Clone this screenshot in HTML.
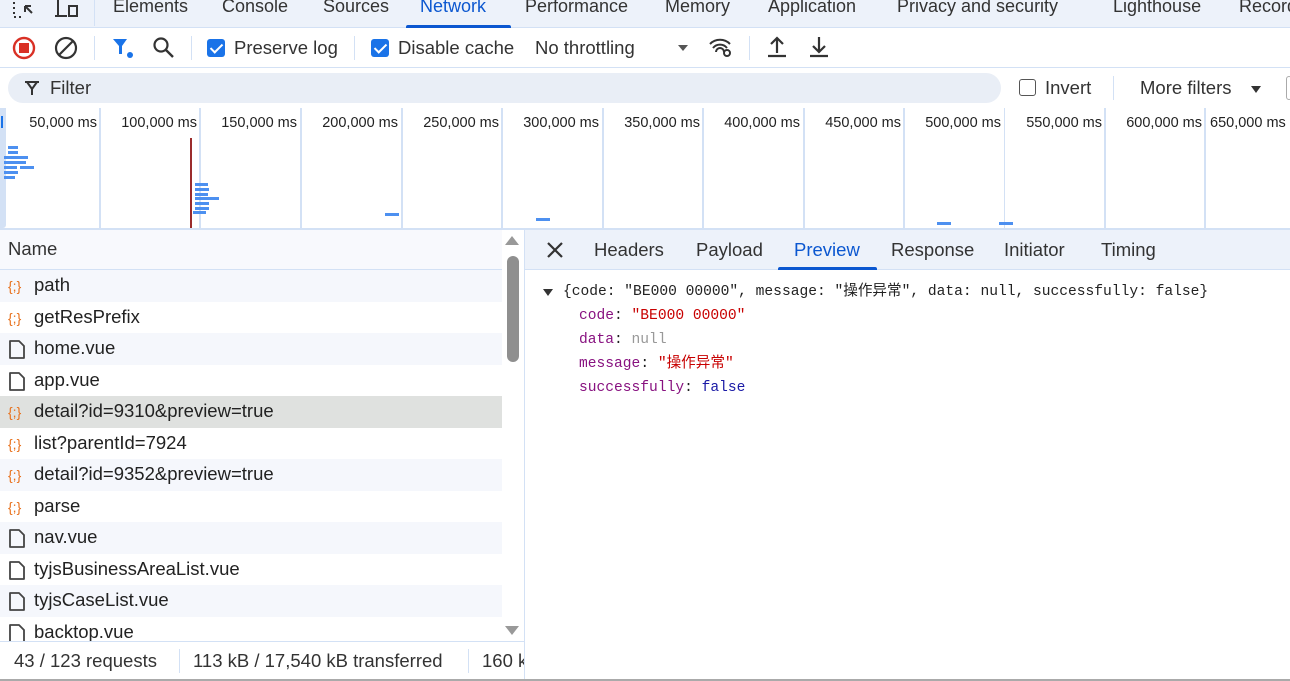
<!DOCTYPE html>
<html><head><meta charset="utf-8"><style>
*{margin:0;padding:0;box-sizing:border-box}
body{width:1290px;height:681px;overflow:hidden;background:#fff;font-family:"Liberation Sans","Noto Sans CJK SC",sans-serif;color:#1f1f1f;position:relative}
.abs{position:absolute}
.tabbar{left:0;top:0;width:1290px;height:28px;background:#edf2fa;border-bottom:1px solid #d3e1f5}
.tab{position:absolute;top:-4px;font-size:18px;color:#333}
.tb{left:0;top:28px;width:1290px;height:40px;border-bottom:1px solid #d3e1f5}
.t{position:absolute;font-size:18.5px;color:#333}
.cb{position:absolute;width:18px;height:18px;background:#1a73e8;border-radius:3px}
.cb:after{content:"";position:absolute;left:6px;top:2px;width:5px;height:10px;border:solid #fff;border-width:0 2px 2px 0;transform:rotate(45deg)}
.sep{position:absolute;width:1px;height:24px;background:#d3e1f5}
.tl{left:0;top:108px;width:1290px;height:121px;border-bottom:1px solid #d3e1f5}
.gl{position:absolute;top:0;width:2px;height:120px;background:#d3e1f5}
.lb{position:absolute;top:7px;font-size:14.5px;color:#222;text-align:right;width:97px;white-space:nowrap}
.bar{position:absolute;height:3px;background:#4d90f0}
.row{position:absolute;left:0;width:502px;height:31.5px;font-size:18.5px;color:#222}
.row span{position:absolute;left:34px;top:4px}
.ic{position:absolute;left:8px;top:7px}
.js{font-family:"Liberation Mono","Noto Sans CJK SC",monospace;font-size:14.6px;position:absolute;white-space:pre;line-height:20px;height:20px}
</style></head><body>
<div class="abs tabbar">
<svg class="abs" style="left:12px;top:0" width="24" height="20"><path d="M2 2v2M2 7v2M2 12v2M2 17h2M7 17h2M13 6l7 7M13 6h6M13 6v6" stroke="#333" stroke-width="2" fill="none"/></svg>
<svg class="abs" style="left:54px;top:0" width="26" height="20"><path d="M4 0v16M1 16h12M15 6h8v10h-8z" stroke="#333" stroke-width="2" fill="none"/></svg>
<div class="abs" style="left:94px;top:0;width:1px;height:26px;background:#d3e1f5"></div>
<div class="tab" style="left:113px">Elements</div>
<div class="tab" style="left:222px">Console</div>
<div class="tab" style="left:323px">Sources</div>
<div class="tab" style="left:420px;color:#0b57d0">Network</div>
<div class="abs" style="left:406px;top:25px;width:105px;height:3px;background:#0b57d0;border-radius:2px 2px 0 0"></div>
<div class="tab" style="left:525px">Performance</div>
<div class="tab" style="left:665px">Memory</div>
<div class="tab" style="left:768px">Application</div>
<div class="tab" style="left:897px">Privacy and security</div>
<div class="tab" style="left:1113px">Lighthouse</div>
<div class="tab" style="left:1239px">Recorder</div>
</div>
<div class="abs tb">
<svg class="abs" style="left:12px;top:8px" width="24" height="24"><circle cx="12" cy="12" r="10" stroke="#d93025" stroke-width="2.4" fill="none"/><rect x="7" y="7" width="10" height="10" fill="#d93025"/></svg>
<svg class="abs" style="left:54px;top:8px" width="24" height="24"><circle cx="12" cy="12" r="10" stroke="#333" stroke-width="2.2" fill="none"/><path d="M5 19L19 5" stroke="#333" stroke-width="2.2"/></svg>
<div class="sep" style="left:94px;top:8px"></div>
<svg class="abs" style="left:112px;top:10px" width="24" height="22"><path d="M1 1h14l-5 7v8h-3v-8z" fill="#1a73e8"/><circle cx="18" cy="17" r="3" fill="#1a73e8"/></svg>
<svg class="abs" style="left:152px;top:8px" width="24" height="24"><circle cx="9" cy="9" r="6.5" stroke="#333" stroke-width="2.2" fill="none"/><path d="M14 14l7 7" stroke="#333" stroke-width="2.4"/></svg>
<div class="sep" style="left:191px;top:8px"></div>
<div class="cb" style="left:207px;top:11px"></div>
<div class="t" style="left:234px;top:9px">Preserve log</div>
<div class="sep" style="left:354px;top:8px"></div>
<div class="cb" style="left:371px;top:11px"></div>
<div class="t" style="left:398px;top:9px">Disable cache</div>
<div class="t" style="left:535px;top:9px">No throttling</div>
<div class="abs" style="left:678px;top:17px;border:5px solid transparent;border-top:6px solid #555;border-bottom:0"></div>
<svg class="abs" style="left:708px;top:8px" width="28" height="24"><path d="M2 8a14 14 0 0 1 20 0M5 12a9 9 0 0 1 14 0M8 16a4 4 0 0 1 8 0" stroke="#333" stroke-width="2" fill="none"/><circle cx="19" cy="17" r="3" stroke="#333" stroke-width="2" fill="none"/></svg>
<div class="sep" style="left:749px;top:8px"></div>
<svg class="abs" style="left:766px;top:7px" width="22" height="24"><path d="M11 18V3M5 9l6-6 6 6M2 21h18" stroke="#333" stroke-width="2.2" fill="none"/></svg>
<svg class="abs" style="left:808px;top:7px" width="22" height="24"><path d="M11 2v15M5 11l6 6 6-6M2 21h18" stroke="#333" stroke-width="2.2" fill="none"/></svg>
</div>
<div class="abs" style="left:8px;top:73px;width:993px;height:30px;background:#e9eef6;border-radius:15px"></div>
<svg class="abs" style="left:24px;top:80px" width="16" height="16"><path d="M1 2h14M3 2l5 7v6M13 2l-5 7" stroke="#333" stroke-width="2" fill="none"/></svg>
<div class="t" style="left:50px;top:77px">Filter</div>
<div class="abs" style="left:1019px;top:79px;width:17px;height:17px;border:1.5px solid #555;border-radius:3px"></div>
<div class="t" style="left:1045px;top:77px">Invert</div>
<div class="abs" style="left:1113px;top:76px;width:1px;height:24px;background:#d3e1f5"></div>
<div class="t" style="left:1140px;top:77px">More filters</div>
<div class="abs" style="left:1251px;top:86px;border:5px solid transparent;border-top:7px solid #333;border-bottom:0"></div>
<div class="abs" style="left:1286px;top:76px;width:6px;height:24px;border:1px solid #aaa;border-radius:3px"></div>
<div class="abs tl">
<div class="abs" style="left:0;top:0;width:6px;height:120px;background:#d3e1f5;border-radius:0 0 3px 0"></div>
<div class="abs" style="left:1px;top:8px;width:2px;height:12px;background:#1a73e8"></div>
<div class="gl" style="left:99px"></div><div class="gl" style="left:199px"></div><div class="gl" style="left:300px"></div><div class="gl" style="left:401px"></div><div class="gl" style="left:501px"></div><div class="gl" style="left:602px"></div><div class="gl" style="left:702px"></div><div class="gl" style="left:803px"></div><div class="gl" style="left:903px"></div><div class="gl" style="left:1004px;width:1px"></div><div class="gl" style="left:1104px"></div><div class="gl" style="left:1204px"></div>
<div class="lb" style="left:0">50,000 ms</div><div class="lb" style="left:100px">100,000 ms</div><div class="lb" style="left:200px">150,000 ms</div><div class="lb" style="left:301px">200,000 ms</div><div class="lb" style="left:402px">250,000 ms</div><div class="lb" style="left:502px">300,000 ms</div><div class="lb" style="left:603px">350,000 ms</div><div class="lb" style="left:703px">400,000 ms</div><div class="lb" style="left:804px">450,000 ms</div><div class="lb" style="left:904px">500,000 ms</div><div class="lb" style="left:1005px">550,000 ms</div><div class="lb" style="left:1105px">600,000 ms</div><div class="lb" style="left:1210px;text-align:left;width:90px">650,000 ms</div>
<div class="bar" style="left:8px;top:38px;width:10px"></div><div class="bar" style="left:8px;top:43px;width:10px"></div><div class="bar" style="left:4px;top:48px;width:24px"></div><div class="bar" style="left:4px;top:53px;width:22px"></div><div class="bar" style="left:4px;top:58px;width:13px"></div><div class="bar" style="left:20px;top:58px;width:14px"></div><div class="bar" style="left:4px;top:63px;width:14px"></div><div class="bar" style="left:4px;top:68px;width:11px"></div>
<div class="abs" style="left:190px;top:30px;width:2px;height:90px;background:#9b2c2c"></div>
<div class="bar" style="left:195px;top:75px;width:13px"></div><div class="bar" style="left:195px;top:80px;width:14px"></div><div class="bar" style="left:195px;top:85px;width:13px"></div><div class="bar" style="left:195px;top:89px;width:24px"></div><div class="bar" style="left:195px;top:94px;width:14px"></div><div class="bar" style="left:195px;top:99px;width:14px"></div><div class="bar" style="left:193px;top:103px;width:13px"></div>
<div class="bar" style="left:385px;top:105px;width:14px"></div><div class="bar" style="left:536px;top:110px;width:14px"></div><div class="bar" style="left:937px;top:114px;width:14px"></div><div class="bar" style="left:999px;top:114px;width:14px"></div>
</div>
<div class="abs" style="left:0;top:229px;width:1290px;height:1px;background:#d3e1f5"></div>
<div class="abs" style="left:0;top:230px;width:502px;height:40px;background:#f8f9fd;border-bottom:1px solid #d3e1f5"></div>
<div class="t" style="left:8px;top:238px">Name</div>
<div class="abs" style="left:502px;top:230px;width:22px;height:411px;background:#fff"></div>
<div class="abs" style="left:505px;top:236px;border:7px solid transparent;border-bottom:9px solid #999;border-top:0"></div>
<div class="abs" style="left:507px;top:256px;width:12px;height:106px;background:#8f8f8f;border-radius:6px"></div>
<div class="abs" style="left:505px;top:626px;border:7px solid transparent;border-top:9px solid #999;border-bottom:0"></div>
<div class="abs" style="left:524px;top:230px;width:1px;height:451px;background:#d3e1f5"></div>

<div class="row" style="top:270px;background:#f5f7fc"><svg class="ic" width="20" height="18"><text x="0" y="14" font-family="Liberation Sans" font-size="14" fill="#e8711c">{;}</text></svg><span>path</span></div>
<div class="row" style="top:301.5px"><svg class="ic" width="20" height="18"><text x="0" y="14" font-family="Liberation Sans" font-size="14" fill="#e8711c">{;}</text></svg><span>getResPrefix</span></div>
<div class="row" style="top:333px;background:#f5f7fc"><svg class="ic" width="18" height="20"><path d="M2 1h9l5 5v12H2z" stroke="#444" stroke-width="1.8" fill="none" stroke-linejoin="round"/></svg><span>home.vue</span></div>
<div class="row" style="top:364.5px"><svg class="ic" width="18" height="20"><path d="M2 1h9l5 5v12H2z" stroke="#444" stroke-width="1.8" fill="none" stroke-linejoin="round"/></svg><span>app.vue</span></div>
<div class="row" style="top:396px;background:#dfe1df"><svg class="ic" width="20" height="18"><text x="0" y="14" font-family="Liberation Sans" font-size="14" fill="#e8711c">{;}</text></svg><span>detail?id=9310&amp;preview=true</span></div>
<div class="row" style="top:427.5px"><svg class="ic" width="20" height="18"><text x="0" y="14" font-family="Liberation Sans" font-size="14" fill="#e8711c">{;}</text></svg><span>list?parentId=7924</span></div>
<div class="row" style="top:459px;background:#f5f7fc"><svg class="ic" width="20" height="18"><text x="0" y="14" font-family="Liberation Sans" font-size="14" fill="#e8711c">{;}</text></svg><span>detail?id=9352&amp;preview=true</span></div>
<div class="row" style="top:490.5px"><svg class="ic" width="20" height="18"><text x="0" y="14" font-family="Liberation Sans" font-size="14" fill="#e8711c">{;}</text></svg><span>parse</span></div>
<div class="row" style="top:522px;background:#f5f7fc"><svg class="ic" width="18" height="20"><path d="M2 1h9l5 5v12H2z" stroke="#444" stroke-width="1.8" fill="none" stroke-linejoin="round"/></svg><span>nav.vue</span></div>
<div class="row" style="top:553.5px"><svg class="ic" width="18" height="20"><path d="M2 1h9l5 5v12H2z" stroke="#444" stroke-width="1.8" fill="none" stroke-linejoin="round"/></svg><span>tyjsBusinessAreaList.vue</span></div>
<div class="row" style="top:585px;background:#f5f7fc"><svg class="ic" width="18" height="20"><path d="M2 1h9l5 5v12H2z" stroke="#444" stroke-width="1.8" fill="none" stroke-linejoin="round"/></svg><span>tyjsCaseList.vue</span></div>
<div class="row" style="top:616.5px;height:24px;overflow:hidden"><svg class="ic" width="18" height="20"><path d="M2 1h9l5 5v12H2z" stroke="#444" stroke-width="1.8" fill="none" stroke-linejoin="round"/></svg><span>backtop.vue</span></div>

<div class="abs" style="left:0;top:641px;width:524px;height:1px;background:#d3e1f5"></div>
<div class="t" style="left:14px;top:650px">43 / 123 requests</div>
<div class="abs" style="left:179px;top:649px;width:1px;height:24px;background:#d3e1f5"></div>
<div class="t" style="left:193px;top:650px">113 kB / 17,540 kB transferred</div>
<div class="abs" style="left:468px;top:649px;width:1px;height:24px;background:#d3e1f5"></div>
<div class="abs" style="left:482px;top:650px;width:42px;overflow:hidden;white-space:nowrap;font-size:18.5px;color:#333">160 kB</div>
<div class="abs" style="left:0;top:679px;width:1290px;height:2px;background:#aaa"></div>

<div class="abs" style="left:525px;top:230px;width:765px;height:40px;background:#edf2fa;border-bottom:1px solid #d3e1f5"></div>
<svg class="abs" style="left:546px;top:241px" width="18" height="18"><path d="M2 2l14 14M16 2L2 16" stroke="#333" stroke-width="2.2"/></svg>
<div class="t" style="left:594px;top:239px">Headers</div>
<div class="t" style="left:696px;top:239px">Payload</div>
<div class="t" style="left:794px;top:239px;color:#0b57d0">Preview</div>
<div class="abs" style="left:778px;top:267px;width:99px;height:3px;background:#0b57d0;border-radius:2px 2px 0 0"></div>
<div class="t" style="left:891px;top:239px">Response</div>
<div class="t" style="left:1004px;top:239px">Initiator</div>
<div class="t" style="left:1101px;top:239px">Timing</div>

<div class="abs" style="left:543px;top:289px;border:5px solid transparent;border-top:7px solid #333;border-bottom:0"></div>
<div class="js" style="left:563px;top:282px;color:#222">{code: "BE000 00000", message: "操作异常", data: null, successfully: false}</div>
<div class="js" style="left:579px;top:306px"><span style="color:#881280">code</span>: <span style="color:#c80000">"BE000 00000"</span></div>
<div class="js" style="left:579px;top:330px"><span style="color:#881280">data</span>: <span style="color:#999">null</span></div>
<div class="js" style="left:579px;top:354px"><span style="color:#881280">message</span>: <span style="color:#c80000">"操作异常"</span></div>
<div class="js" style="left:579px;top:378px"><span style="color:#881280">successfully</span>: <span style="color:#1a1aa6">false</span></div>
</body></html>
